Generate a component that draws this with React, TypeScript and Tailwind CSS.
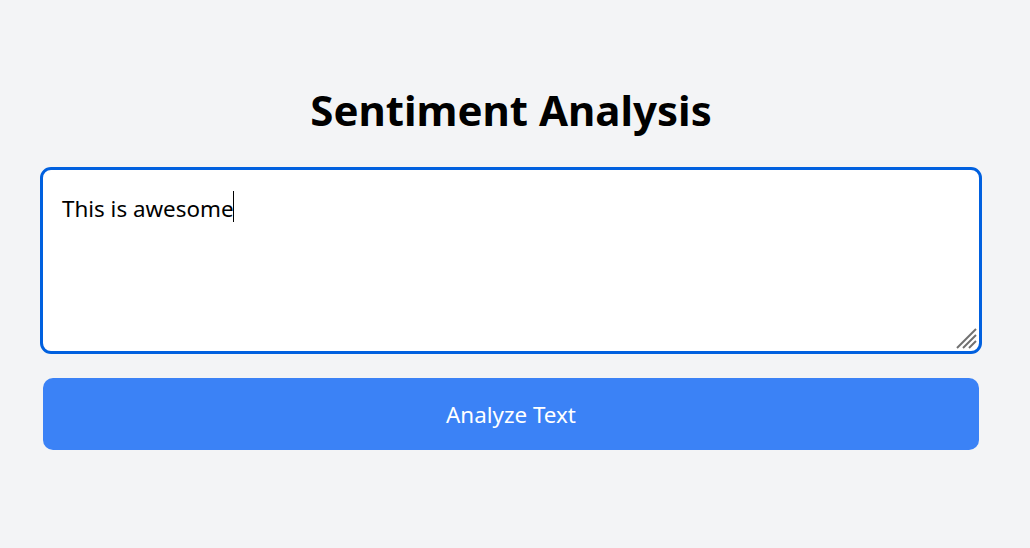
import React from "react";

export default function App() {
  return (
    <div
      className="min-h-[548px] bg-[#f3f4f6] pl-[43px] pr-[51px] pt-[80px]"
      style={{ fontFamily: '"Noto Sans", "Open Sans", sans-serif' }}
    >
      <div className="flex w-[936px] flex-col items-stretch">
        <h1 className="text-center text-[42px] font-bold leading-[60px] text-black">
          Sentiment Analysis
        </h1>
        <div className="relative mx-[-3px] mt-[27px] flex">
          <textarea
            defaultValue="This is awesome"
            className="h-[187px] w-full resize-none rounded-[11px] border-[3px] border-[#0060df] bg-white pl-[19px] pr-[19px] pt-[24px] text-[22.4px] leading-[30px] text-black outline-none"
          />
          <span className="pointer-events-none absolute left-[193px] top-[24px] h-[31px] w-px bg-black" />
          <svg
            className="pointer-events-none absolute bottom-[4px] right-[4px]"
            width="24"
            height="24"
            viewBox="0 0 24 24"
          >
            <g stroke="#707070" strokeWidth="2" strokeLinecap="butt">
              <line x1="22" y1="3" x2="3" y2="22" />
              <line x1="22" y1="9" x2="9" y2="22" />
              <line x1="22" y1="15" x2="15" y2="22" />
            </g>
          </svg>
        </div>
        <button className="mt-[24px] h-[72px] rounded-[10px] bg-[#3b82f6] pt-[2px] text-[22.4px] text-white">
          Analyze Text
        </button>
      </div>
    </div>
  );
}
